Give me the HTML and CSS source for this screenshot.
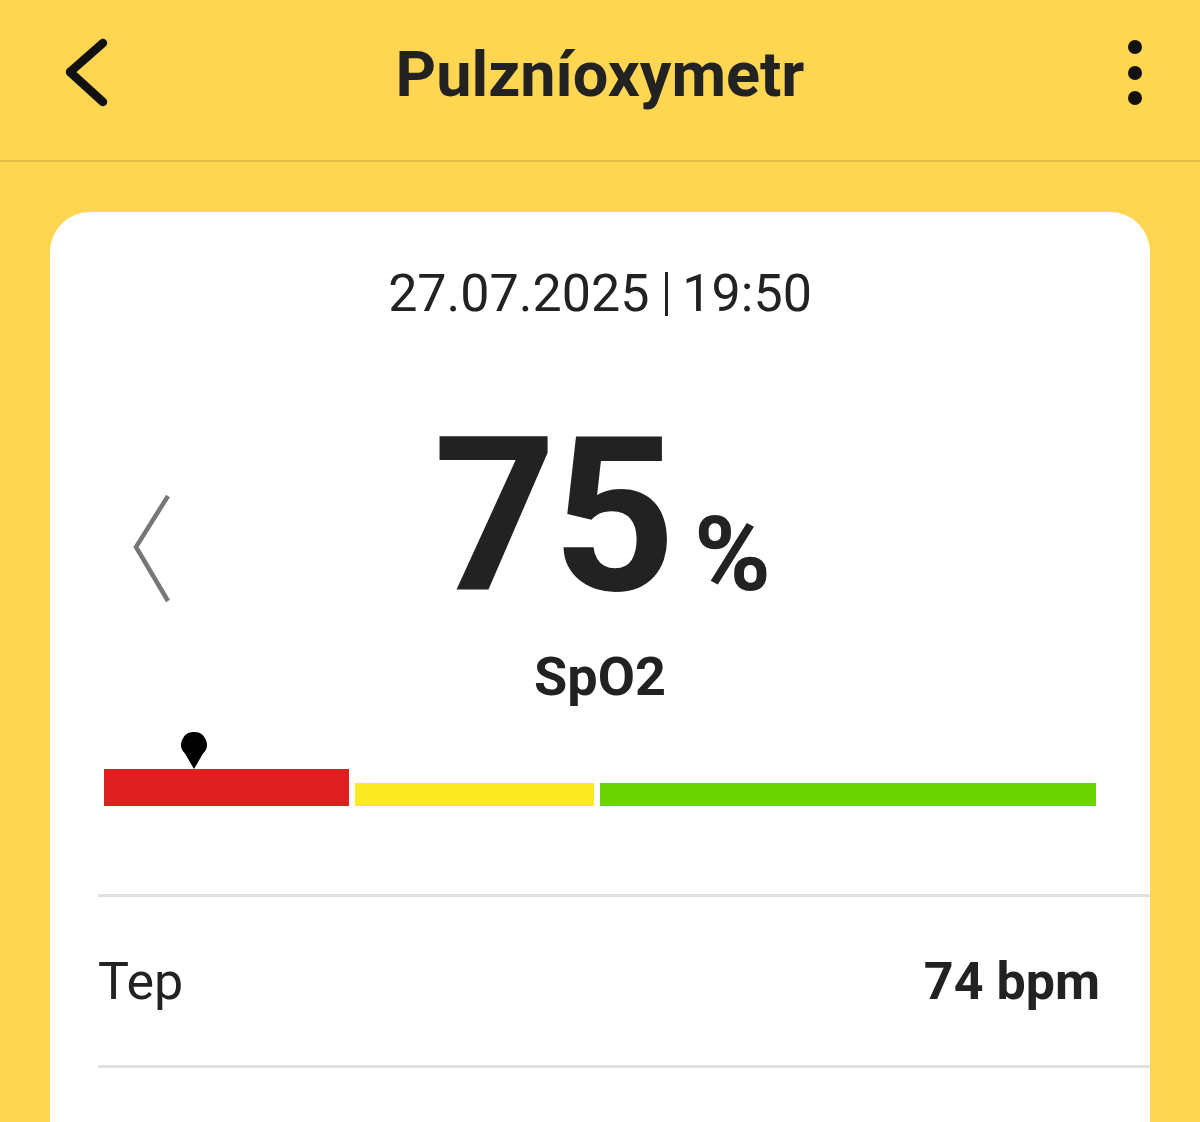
FILE: index.html
```html
<!DOCTYPE html>
<html lang="cs">

<head>
    <meta charset="UTF-8">
    <meta name="viewport" content="width=device-width, initial-scale=1.0">
    <title>Pulzníoxymetr</title>
    <link rel="stylesheet" href="styles.css">
</head>

<body>
    <header class="topbar">
        <svg class="back" width="56" height="76" viewBox="0 0 56 76">
            <path d="M 43 7 L 10 36 L 43 66"></path>
        </svg>
        <h1 class="title">Pulzníoxymetr</h1>
        <svg class="menu" width="20" height="70" viewBox="0 0 20 70">
            <circle cx="10" cy="8" r="7"></circle>
            <circle cx="10" cy="34" r="7"></circle>
            <circle cx="10" cy="59" r="7"></circle>
        </svg>
    </header>

    <main class="card">
        <div class="date">27.07.2025<span class="sep"></span>19:50</div>

        <div class="reading">
            <svg class="prev" width="40" height="110" viewBox="0 0 40 110">
                <path d="M 35 2 L 3 53 L 35 107"></path>
            </svg>
            <div class="value">
                <span class="num">75</span>
                <span class="unit">%</span>
            </div>
            <div></div>
        </div>

        <div class="label">SpO2</div>

        <div class="scale">
            <div class="seg red" style="flex: 245"></div>
            <div class="seg yellow" style="flex: 239"></div>
            <div class="seg green" style="flex: 496"></div>
            <!-- ukazatel hodnoty -->
            <svg class="pin" style="left: 77px" width="26" height="38" viewBox="0 0 26 38">
                <path d="M 13 0 A 12.5 12.5 0 0 1 22 21.5 L 13 37 L 4 21.5 A 12.5 12.5 0 0 1 13 0 Z"></path>
            </svg>
        </div>

        <div class="rows">
            <div class="row">
                <span class="row-name">Tep</span>
                <span class="row-value">74 bpm</span>
            </div>
        </div>
    </main>
</body>

</html>
```

FILE: styles.css
```css
body {
    margin: 0;
    background: #ffd652;
    font-family: Roboto, "Noto Sans", sans-serif;
    color: #222;
    overflow: hidden;
}

.topbar {
    display: grid;
    grid-template-columns: 1fr auto 1fr;
    align-items: center;
    height: 148px;
    padding-bottom: 12px;
    border-bottom: 2px solid #e3bc46;
}

.back {
    margin-left: 60px;
}

.back path {
    fill: none;
    stroke: #111;
    stroke-width: 8.5;
    stroke-linecap: round;
    stroke-linejoin: round;
}

.title {
    margin: 0;
    font-size: 63px;
    font-weight: 700;
    line-height: 1;
    color: #222;
}

.menu {
    justify-self: end;
    margin-right: 55px;
}

.menu circle {
    fill: #111;
}

.card {
    margin: 50px 50px 0;
    min-height: 858px;
    background: #fff;
    border-radius: 40px 40px 0 0;
    padding-top: 52px;
}

.date {
    display: flex;
    justify-content: center;
    align-items: center;
    font-size: 52px;
    line-height: 60px;
}

.sep {
    width: 3px;
    height: 44px;
    margin: 0 14px 0 16px;
    background: #222;
}

.reading {
    display: grid;
    grid-template-columns: 1fr auto 1fr;
    align-items: start;
    margin-top: 85px;
}

.prev {
    margin: 85px 0 0 83px;
}

.prev path {
    fill: none;
    stroke: #777;
    stroke-width: 4.5;
}

.value {
    display: flex;
    align-items: baseline;
    margin-left: 4px;
}

.num {
    font-size: 215px;
    font-weight: 700;
    line-height: 1;
    letter-spacing: -4px;
}

.unit {
    font-size: 104px;
    font-weight: 700;
    line-height: 1;
    margin-left: 22px;
}

.label {
    margin-top: 23px;
    text-align: center;
    font-size: 54px;
    font-weight: 700;
    line-height: 60px;
}

.scale {
    position: relative;
    display: flex;
    align-items: flex-end;
    gap: 6px;
    margin: 25px 54px 0;
    padding-top: 37px;
}

.seg {
    height: 23px;
}

.red {
    height: 37px;
    background: #e02020;
}

.yellow {
    background: #fbea22;
}

.green {
    background: #6cd400;
}

.pin {
    position: absolute;
    top: 0;
}

.pin path {
    fill: #000;
}

.rows {
    margin: 88px 0 0 48px;
}

.row {
    display: flex;
    justify-content: space-between;
    align-items: center;
    height: 168px;
    padding-right: 50px;
    border-top: 3px solid #e0e0e0;
    border-bottom: 3px solid #e0e0e0;
    font-size: 52px;
}

.row-value {
    font-weight: 700;
}
```
